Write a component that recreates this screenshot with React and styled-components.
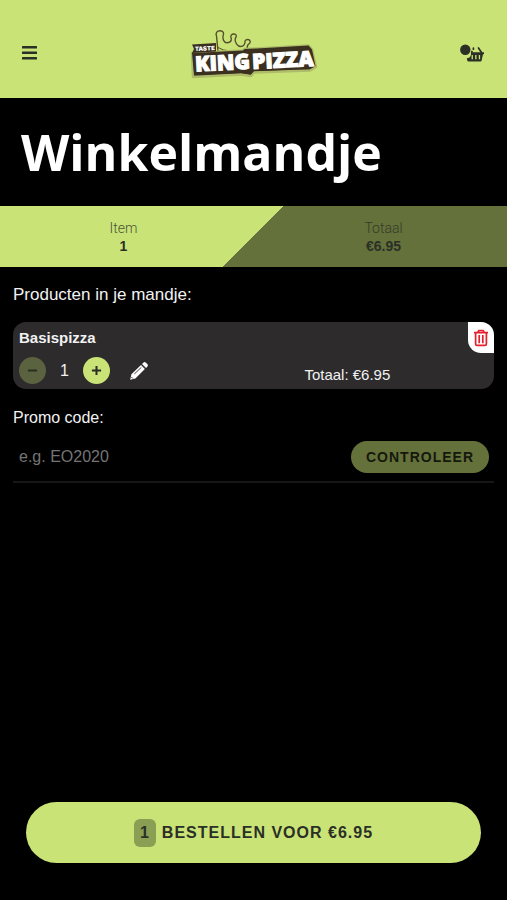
import React, { useState } from 'react'
import styled, { createGlobalStyle, ThemeProvider } from 'styled-components'

const theme = {
  primary: '#c9e377',
  primaryDark: '#64713a',
  disabled: '#5b6240',
  dark: '#2b2f26',
  card: '#2d2b2c',
  danger: '#e3202b',
  sans: '"Liberation Sans", Arial, sans-serif',
  heading: '"Open Sans", "Noto Sans", sans-serif',
  light: 300,
  bold: 700
}

const GlobalStyle = createGlobalStyle`
  *, *::before, *::after {
    box-sizing: border-box;
  }

  body {
    margin: 0;
    background-color: #000;
    color: #f2f2f2;
    font-family: ${theme.sans};
    font-size: 16px;
    line-height: 20px;
  }

  button, input {
    font-family: inherit;
  }

  button {
    padding: 0;
    border: none;
    background: none;
    cursor: pointer;
  }
`

const StyledPage = styled.div`
  display: flex;
  flex-direction: column;
  min-height: 100vh;
`

const StyledHeader = styled.header`
  display: flex;
  align-items: center;
  justify-content: space-between;
  padding: 21px 20px 13px;
  background-color: ${({ theme }) => theme.primary};
`

const StyledHeaderButton = styled.button`
  display: flex;
  color: ${({ theme }) => theme.dark};
`

const StyledLogo = styled.a`
  display: flex;
`

const StyledHeading = styled.h1`
  margin: 0;
  padding: 19px 21px;
  color: #fff;
  font-family: ${({ theme }) => theme.heading};
  font-size: 50px;
  font-weight: ${({ theme }) => theme.bold};
  line-height: 70px;
`

const StyledSummary = styled.dl`
  display: grid;
  grid-template-columns: 1fr 1fr;
  grid-gap: 13px;
  margin: 0;
  padding: 13px 0 12px;
  background: linear-gradient(
    135deg,
    ${({ theme }) => theme.primary} 50%,
    ${({ theme }) => theme.primaryDark} 50%
  );
  color: ${({ theme }) => theme.dark};
  font-size: 14px;
  line-height: 18px;
  text-align: center;
`

const StyledTerm = styled.dt`
  font-family: Roboto, sans-serif;
  font-weight: ${({ theme }) => theme.light};
  opacity: 0.8;
`

const StyledValue = styled.dd`
  margin: 0;
  font-weight: ${({ theme }) => theme.bold};
`

const StyledMain = styled.main`
  flex: 1;
  padding: 18px 13px;
`

const StyledSubheading = styled.h2`
  margin: 0 0 17px;
  font-size: 17px;
  font-weight: 400;
  line-height: 20px;
`

const StyledCard = styled.article`
  position: relative;
  margin-bottom: 19px;
  padding: 6px 6px 5px;
  border-radius: 13px;
  background-color: ${({ theme }) => theme.card};
`

const StyledName = styled.h3`
  margin: 0 0 9px;
  font-size: 15px;
  font-weight: ${({ theme }) => theme.bold};
  line-height: 20px;
`

const StyledRow = styled.div`
  display: grid;
  grid-template-columns: 3fr 2fr;
  grid-gap: 10px;
  align-items: center;
`

const StyledActions = styled.div`
  display: flex;
  align-items: center;
`

const StyledRoundButton = styled.button`
  display: flex;
  align-items: center;
  justify-content: center;
  width: 27px;
  height: 27px;
  border-radius: 50%;
  background-color: ${({ theme }) => theme.primary};
  color: ${({ theme }) => theme.dark};

  &:disabled {
    background-color: ${({ theme }) => theme.disabled};
    cursor: default;
  }
`

const StyledQuantity = styled.span`
  width: 37px;
  text-align: center;
`

const StyledEditButton = styled.button`
  display: flex;
  margin-left: 19px;
  color: #fff;
`

const StyledPrice = styled.span`
  padding-top: 9px;
  font-size: 15px;
  line-height: 18px;
`

const StyledRemoveButton = styled.button`
  position: absolute;
  top: 0;
  right: 0;
  display: flex;
  align-items: center;
  justify-content: center;
  width: 26px;
  height: 31px;
  border-radius: 0 13px 0 13px;
  background-color: #fff;
  color: ${({ theme }) => theme.danger};
`

const StyledLabel = styled.label`
  display: block;
  margin-bottom: 13px;
`

const StyledPromo = styled.div`
  display: flex;
  align-items: center;
  padding: 0 5px 8px 6px;
  border-bottom: 2px solid #161616;
`

const StyledInput = styled.input`
  flex: 1;
  min-width: 0;
  height: 32px;
  padding: 0;
  border: none;
  outline: none;
  background: none;
  color: #fff;
  font-size: 16px;

  &::placeholder {
    color: #757575;
    opacity: 1;
  }
`

const StyledPromoButton = styled.button`
  height: 32px;
  padding: 0 15px;
  border-radius: 16px;
  background-color: ${({ theme }) => theme.primaryDark};
  color: #15180d;
  font-size: 14px;
  font-weight: ${({ theme }) => theme.bold};
  letter-spacing: 1px;
  text-transform: uppercase;
`

const StyledFooter = styled.footer`
  padding: 0 26px 37px;
`

const StyledOrderButton = styled.button`
  display: flex;
  align-items: center;
  justify-content: center;
  width: 100%;
  height: 61px;
  border-radius: 31px;
  background-color: ${({ theme }) => theme.primary};
  color: ${({ theme }) => theme.dark};
  font-size: 16px;
  font-weight: ${({ theme }) => theme.bold};
  letter-spacing: 1px;
  text-transform: uppercase;
`

const StyledCount = styled.span`
  margin-right: 6px;
  padding: 4px 6px;
  border-radius: 6px;
  background-color: #8b9f54;
  line-height: 20px;
`

const MenuIcon = () => (
  <svg width="20" height="20" viewBox="0 0 20 20" fill="currentColor" aria-hidden="true">
    <rect x="2" y="3" width="15" height="2.6" rx="0.5" />
    <rect x="2" y="8.5" width="15" height="2.6" rx="0.5" />
    <rect x="2" y="14" width="15" height="2.6" rx="0.5" />
  </svg>
)

const BasketIcon = () => (
  <svg width="28" height="24" viewBox="0 0 28 24" aria-hidden="true">
    <path
      d="M19.5 7l3 4.5M14.4 7v1.2M13 10.500l-.3.8"
      fill="none"
      stroke="currentColor"
      strokeWidth="1.7"
      strokeLinecap="round"
    />
    <path
      fill="currentColor"
      fillRule="evenodd"
      d="M12 11.2h13v2h-1l-1.3 6c-.2 1-.8 1.4-1.7 1.4H10c-1 0-1.6-.5-1.8-1.4l-.4-2c2.200 0 4.200-1.600 4.200-4zM12.600 14v4.200h1.300V14zM16.200 14v4.200h1.300V14zM19.800 14v4.200h1.300V14z"
    />
    <circle cx="6.3" cy="8.8" r="5.2" fill="currentColor" />
  </svg>
)

const PencilIcon = () => (
  <svg width="20" height="20" viewBox="0 0 20 20" aria-hidden="true">
    <path
      fill="currentColor"
      d="M1.2 18.8l1.2-5.6L12 4l3.9 3.9-9.5 9.5zM13 3l1.3-1.3c.8-.8 1.8-.8 2.6 0l1.4 1.4c.8.8.8 1.8 0 2.6L17 7z"
    />
    <path d="M5.3 13l7-6.6M2.4 16l1.5 1.5" stroke="#2d2b2c" strokeWidth="0.9" fill="none" />
  </svg>
)

const TrashIcon = () => (
  <svg
    width="16"
    height="18"
    viewBox="0 0 16 18"
    fill="none"
    stroke="currentColor"
    strokeWidth="1.7"
    aria-hidden="true"
  >
    <path d="M1 3.7h14M4.7 3.5l1.2-2h4.2l1.2 2" />
    <path d="M2.6 4v11c0 .9.5 1.4 1.4 1.4h8c.9 0 1.4-.5 1.4-1.4V4M6.2 6v8.2M9.8 6v8.2" />
  </svg>
)

const SignIcon = ({ plus }) => (
  <svg
    width="11"
    height="11"
    viewBox="0 0 12 12"
    stroke="currentColor"
    strokeWidth="2.2"
    aria-hidden="true"
  >
    <path d={plus ? 'M1 6h10M6 1v10' : 'M1 6h10'} />
  </svg>
)

const Logo = () => (
  <svg width="136" height="64" viewBox="-4 1 136 64" role="img" aria-label="Taste King Pizza">
    <path
      d="M32 31l-1.5-15c-1.2-3 .5-5.5 4-5.300 3.300.3 3.500 3 2.600 5-.8 3 .9 7 3.600 7 3 0 5-1.500 4.600-4-1.600-3 .5-5 3-4.700 2.400.3 2.500 2.800 1 4.300-1 3.700 2.200 8.200 5.500 8.200 2.600 0 4.700-2.500 4.200-5.500 1-2 4.500-2.200 5.200.3.500 2.200-1.500 3-2.500 3.700L60.500 31"
      fill="none"
      stroke="#57502f"
      strokeWidth="1.4"
      strokeLinejoin="round"
    />
    <path d="M31 27q6 4 14 4" fill="none" stroke="#57502f" strokeWidth="1" />
    <path
      d="M6 33l51-2.5 1.500-1.500 12-.5 52-3 3.500 4 4 17.500-6 3.500-56 2-3 3.500-10-1.500-48 2.500z"
      fill="#3b3020"
      stroke="#aebb69"
      strokeWidth="2.5"
      strokeLinejoin="round"
    />
    <path
      d="M6 33l51-2.5 1.500-1.500 12-.5 52-3 3.500 4 3.500 16.500-5.500 3-56 2-3 3.500-10-1.500-47 2z"
      fill="#3b3020"
    />
    <path d="M6 24.5l24-1.5v8.500l-24 1.500 2-4z" fill="#3b3020" />
    <g transform="rotate(-3 68 40)">
      <text x="9.5" y="28" fontSize="6" fill="#fff" fontFamily="Inter, sans-serif" fontWeight="900">
        TASTE
      </text>
      <g
        fill="#fff"
        stroke="#fff"
        strokeWidth="1.1"
        fontSize="21"
        fontFamily="'Open Sans', sans-serif"
        fontWeight="800"
      >
        <text x="9" y="48.5">KING</text>
        <text x="66" y="49">PIZZA</text>
      </g>
    </g>
  </svg>
)

const UNIT_PRICE = 6.95

const App = () => {
  const [quantity, setQuantity] = useState(1)
  const [promo, setPromo] = useState('')

  const total = `€${(UNIT_PRICE * quantity).toFixed(2)}`

  return (
    <ThemeProvider theme={theme}>
      <GlobalStyle />
      <StyledPage>
        <StyledHeader>
          <StyledHeaderButton aria-label="Menu">
            <MenuIcon />
          </StyledHeaderButton>
          <StyledLogo href="#">
            <Logo />
          </StyledLogo>
          <StyledHeaderButton aria-label="Winkelmandje">
            <BasketIcon />
          </StyledHeaderButton>
        </StyledHeader>
        <StyledHeading>Winkelmandje</StyledHeading>
        <StyledSummary>
          <div>
            <StyledTerm>Item</StyledTerm>
            <StyledValue>{quantity}</StyledValue>
          </div>
          <div>
            <StyledTerm>Totaal</StyledTerm>
            <StyledValue>{total}</StyledValue>
          </div>
        </StyledSummary>
        <StyledMain>
          <StyledSubheading>Producten in je mandje:</StyledSubheading>
          <StyledCard>
            <StyledName>Basispizza</StyledName>
            <StyledRow>
              <StyledActions>
                <StyledRoundButton
                  aria-label="Minder"
                  disabled={quantity === 1}
                  onClick={() => setQuantity(quantity - 1)}
                >
                  <SignIcon />
                </StyledRoundButton>
                <StyledQuantity>{quantity}</StyledQuantity>
                <StyledRoundButton aria-label="Meer" onClick={() => setQuantity(quantity + 1)}>
                  <SignIcon plus />
                </StyledRoundButton>
                <StyledEditButton aria-label="Bewerken">
                  <PencilIcon />
                </StyledEditButton>
              </StyledActions>
              <StyledPrice>Totaal: {total}</StyledPrice>
            </StyledRow>
            <StyledRemoveButton aria-label="Verwijderen">
              <TrashIcon />
            </StyledRemoveButton>
          </StyledCard>
          <StyledLabel htmlFor="promo">Promo code:</StyledLabel>
          <StyledPromo>
            <StyledInput
              id="promo"
              type="text"
              placeholder="e.g. EO2020"
              value={promo}
              onChange={e => setPromo(e.target.value)}
            />
            <StyledPromoButton>Controleer</StyledPromoButton>
          </StyledPromo>
        </StyledMain>
        <StyledFooter>
          <StyledOrderButton>
            <StyledCount>{quantity}</StyledCount>
            Bestellen voor {total}
          </StyledOrderButton>
        </StyledFooter>
      </StyledPage>
    </ThemeProvider>
  )
}

export default App
